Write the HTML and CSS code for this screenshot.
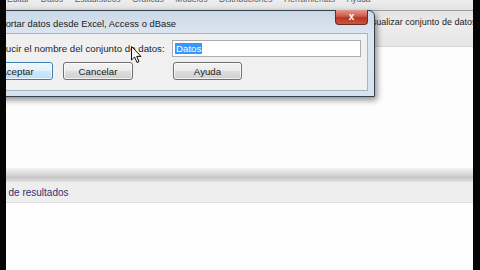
FILE: index.html
```html
<!DOCTYPE html>
<html lang="es">
<head>
<meta charset="utf-8">
<title>Importar datos</title>
<link rel="stylesheet" href="styles.css">
</head>
<body>
<div class="screen">
  <div class="edge edge-left"></div>
  <div class="main">
    <div class="menubar">
      <span class="menu-item">Editar</span>
      <span class="menu-item">Datos</span>
      <span class="menu-item">Estadísticos</span>
      <span class="menu-item">Gráficas</span>
      <span class="menu-item">Modelos</span>
      <span class="menu-item">Distribuciones</span>
      <span class="menu-item">Herramientas</span>
      <span class="menu-item">Ayuda</span>
    </div>
    <div class="toolbar">
      <span class="tool-button">Visualizar conjunto de datos</span>
    </div>
    <div class="script-pane"></div>
    <div class="splitter"></div>
    <div class="tabbar"><span class="tab-label">Ventana de resultados</span></div>
    <div class="output-pane"></div>

    <div class="dialog">
      <div class="titlebar">
        <span class="title">Importar datos desde Excel, Access o dBase</span>
        <span class="close">x</span>
      </div>
      <div class="client">
        <div class="field-row">
          <label class="field-label">Introducir el nombre del conjunto de datos:</label>
          <div class="input"><span class="selected">Datos</span></div>
        </div>
        <div class="button-row">
          <span class="btn btn-default">Aceptar</span>
          <span class="btn btn-cancel">Cancelar</span>
          <span class="btn btn-help">Ayuda</span>
        </div>
      </div>
    </div>

    <svg class="cursor" width="12" height="18" viewBox="0 0 12 18">
      <path d="M0.5 0.5 L0.5 14 L3.6 11 L6 16.5 L8 15.6 L5.7 10.4 L10 10.4 Z" fill="#fff" stroke="#111" stroke-width="1" stroke-linejoin="round"/>
    </svg>
  </div>
  <div class="edge edge-right"></div>
</div>
</body>
</html>
```

FILE: styles.css
```css
* { box-sizing: border-box; }
html, body { margin: 0; padding: 0; }
body {
  width: 480px;
  height: 270px;
  overflow: hidden;
  background: #000;
  font-family: "Liberation Sans", Arial, sans-serif;
  font-size: 9.7px;
  color: #1b1b1b;
}
.screen {
  display: flex;
  width: 480px;
  height: 270px;
}
.edge { background: #050505; flex: none; }
.edge-left { width: 6px; }
.edge-right { flex: 1; }
.main {
  position: relative;
  width: 467px;
  height: 270px;
  overflow: hidden;
  display: flex;
  flex-direction: column;
  background: #fefefe;
}

/* menu bar (top half cut off) */
.menubar {
  height: 10px;
  flex: none;
  overflow: hidden;
  display: flex;
  align-items: flex-end;
  gap: 11.6px;
  padding-left: 1px;
  background: linear-gradient(#eeeeee, #e2e2e2);
}
.menu-item {
  font-size: 8.5px;
  line-height: 11px;
  padding-bottom: 5px;
  color: #5e5e5e;
  white-space: nowrap;
}

.toolbar {
  height: 36px;
  flex: none;
  display: flex;
  align-items: center;
  padding-left: 358px;
  padding-bottom: 14px;
  border-top: 1px solid #9c9c9c;
  background: linear-gradient(#e4e4e4, #ededed 40%, #e6e6e6);
  white-space: nowrap;
}
.tool-button {
  font-size: 9px;
  color: #222;
}

.script-pane {
  height: 122px;
  flex: none;
  border-top: 1px solid #d8d8d8;
  background: #fdfdfd;
}
.splitter {
  height: 14px;
  flex: none;
  background: linear-gradient(#f4f4f4, #e6e6e6 20%, #dadada 45%, #c6c6c6 65%, #d4d4d4 85%, #e4e4e4);
}
.tabbar {
  height: 21px;
  flex: none;
  display: flex;
  align-items: center;
  background: #eeeeee;
  border-bottom: 1px solid #e0e0e0;
  white-space: nowrap;
}
.tab-label {
  margin-left: -37px;
  font-size: 10px;
  color: #2e2e74;
}
.output-pane { flex: 1; background: #fefefe; }

/* dialog window */
.dialog {
  position: absolute;
  left: -40px;
  top: 10px;
  width: 409px;
  padding: 0 6px 5px 6px;
  border: 1px solid #34404c;
  border-radius: 6px 6px 0 0;
  background: linear-gradient(#cbd8e7, #dde7f2 30%, #d6e2ef);
  box-shadow: 2px 3px 6px rgba(0, 0, 0, 0.45);
}
.titlebar {
  height: 22px;
  display: flex;
  align-items: flex-start;
}
.title {
  margin-left: 17px;
  margin-top: 7px;
  font-size: 9.4px;
  color: #1a1a1a;
  white-space: nowrap;
}
.close {
  margin-left: auto;
  width: 33px;
  height: 15px;
  margin-top: -1px;
  border: 1px solid #6b2a22;
  border-top: none;
  border-radius: 0 0 4px 4px;
  background: linear-gradient(#e29a8e, #cf5a4a 45%, #b83526 55%, #c8553f);
  color: #fff;
  font-weight: bold;
  font-size: 10px;
  line-height: 13px;
  text-align: center;
}
.client {
  background: #f0f0f0;
  border: 1px solid #a7b5c4;
  padding: 6px 6px 10px 7px;
}
.field-row {
  display: flex;
  align-items: center;
  height: 17px;
}
.field-label {
  width: 191px;
  flex: none;
  white-space: nowrap;
  font-size: 9.7px;
  color: #1e1e1e;
}
.input {
  width: 189px;
  height: 17px;
  flex: none;
  background: #fff;
  border: 1px solid #abadb3;
  padding: 1px 2px;
  display: flex;
  align-items: center;
}
.selected {
  background: #3399ff;
  color: #fff;
  font-size: 9.7px;
  line-height: 11px;
  padding: 0 1px;
}
.button-row {
  display: flex;
  margin-top: 5px;
  height: 18px;
}
.btn {
  width: 70px;
  height: 18px;
  flex: none;
  display: flex;
  align-items: center;
  justify-content: center;
  font-size: 9.7px;
  color: #1c1c1c;
  border: 1px solid #707070;
  border-radius: 3px;
  background: linear-gradient(#f3f3f3, #ebebeb 48%, #dddddd 52%, #cfcfcf);
  box-shadow: inset 0 0 0 1px rgba(255, 255, 255, 0.7);
}
.btn-default {
  width: 72px;
  border-color: #3c7fb1;
  background: linear-gradient(#eef7fd, #e2f1fb 48%, #cfe8f8 52%, #bfe0f6);
}
.btn-cancel { margin-left: 10px; }
.btn-help { margin-left: 40px; width: 69px; }

.cursor {
  position: absolute;
  left: 125px;
  top: 46px;
}
```
